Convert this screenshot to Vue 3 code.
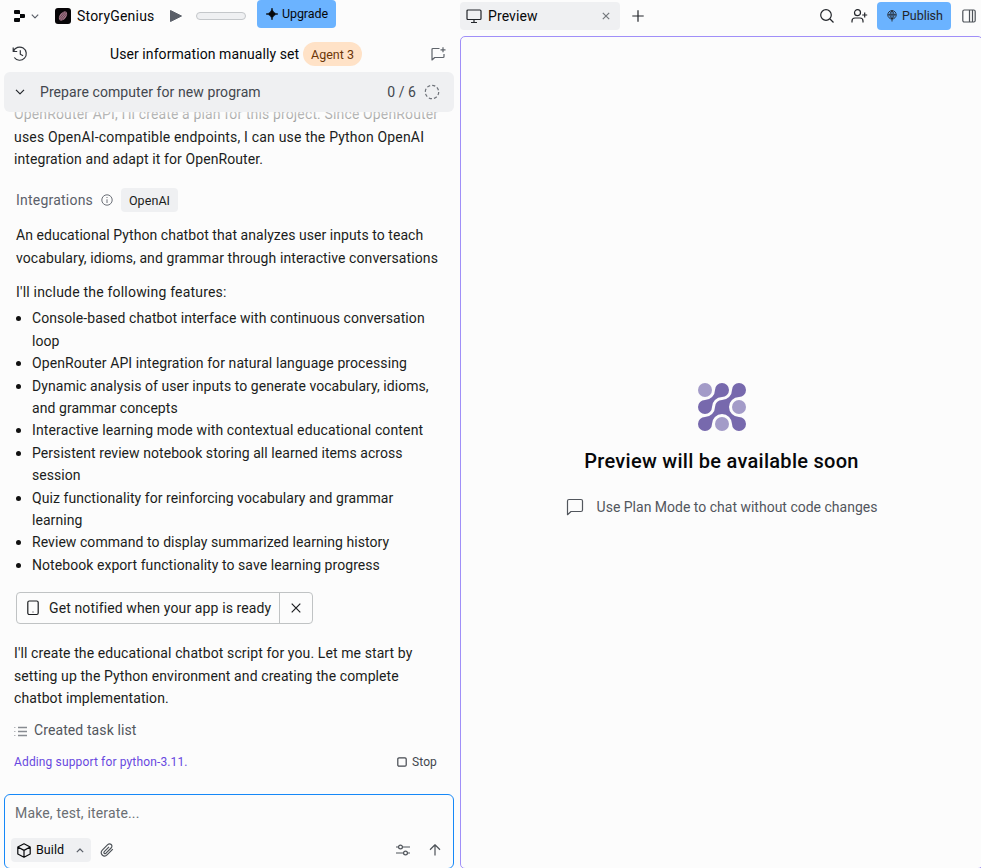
<script setup>
const intro = ["OpenRouter API, I'll create a plan for this project. Since OpenRouter", 'uses OpenAI-compatible endpoints, I can use the Python OpenAI', 'integration and adapt it for OpenRouter.']
const summary = ['An educational Python chatbot that analyzes user inputs to teach', 'vocabulary, idioms, and grammar through interactive conversations']
const features = [
  ['Console-based chatbot interface with continuous conversation', 'loop'],
  ['OpenRouter API integration for natural language processing'],
  ['Dynamic analysis of user inputs to generate vocabulary, idioms,', 'and grammar concepts'],
  ['Interactive learning mode with contextual educational content'],
  ['Persistent review notebook storing all learned items across', 'session'],
  ['Quiz functionality for reinforcing vocabulary and grammar', 'learning'],
  ['Review command to display summarized learning history'],
  ['Notebook export functionality to save learning progress'],
]
const closing = ["I'll create the educational chatbot script for you. Let me start by", 'setting up the Python environment and creating the complete', 'chatbot implementation.']
</script>

<template>
  <div class="app">
    <section class="left">
      <header class="topbar">
        <svg class="replit" width="12" height="12" viewBox="0 0 12 12"><path d="M1 0h4q1 0 1 1v3H1Q0 4 0 3V1Q0 0 1 0zM6 4h4q1 0 1 1v2q0 1-1 1H6zM1 8h5v3q0 1-1 1H1q-1 0-1-1V9q0-1 1-1z" fill="#07080a" /></svg>
        <svg class="menu-chev" width="8" height="5" viewBox="0 0 8 5"><path d="M.8.7 4 3.9 7.200.7" class="ln" /></svg>
        <svg class="applogo" width="16" height="16" viewBox="0 0 16 16"><rect width="16" height="16" rx="3" fill="#070507" /><g transform="rotate(38 8 8)"><ellipse cx="8" cy="8" rx="3.200" ry="5.300" fill="#a77a8b" /><path d="M6.500 4v8M8 3v10M9.500 4v8" stroke="#4b2c3b" stroke-width=".6" /></g></svg>
        <span class="appname">StoryGenius</span>
        <svg class="play" width="12" height="12" viewBox="0 0 12 12"><path d="M.5.5v11L11.500 6z" fill="#5b6069" stroke="#5b6069" stroke-linejoin="round" /></svg>
        <span class="meter"></span>
        <button class="upgrade"><svg width="12" height="12" viewBox="0 0 12 12"><path d="M6 0Q6.600 5.400 12 6 6.600 6.600 6 12 5.400 6.600 0 6 5.400 5.400 6 0z" fill="#07080a" stroke="#07080a" stroke-width=".6" /></svg><span>Upgrade</span></button>
      </header>

      <div class="threadbar">
        <svg class="history" width="16" height="16" viewBox="0 0 16 16"><path d="M1.200 1.500v4h4M1.500 5.300A6.600 6.600 0 1 1 2.300 11.500M8.300 4.300v4l2.800 1.400" class="ln" /></svg>
        <div class="thread"><span class="thread-title">User information manually set</span><span class="agent">Agent 3</span></div>
        <svg class="newchat" width="15" height="14" viewBox="0 0 15 14"><path d="M8.500 1.500H2q-1 0-1 1V13l2.700-2.500H12q1 0 1-1V7M12 .3v5M9.500 2.800h5" class="ln" /></svg>
      </div>

      <div class="task">
        <svg width="10" height="6" viewBox="0 0 10 6"><path d="M1 .8l4 4 4-4" class="ln chev" /></svg>
        <span class="task-title">Prepare computer for new program</span>
        <span class="count">0 / 6</span>
        <svg width="16" height="16" viewBox="0 0 16 16"><circle cx="8" cy="8" r="6.700" class="ln dash" /></svg>
      </div>

      <main class="chat">
        <div class="fade"></div>
        <p class="intro"><span v-for="l in intro" :key="l" class="line">{{ l }}</span></p>
        <div class="integrations">
          <span class="int-label">Integrations</span>
          <svg width="12" height="12" viewBox="0 0 12 12"><circle cx="6" cy="6" r="5.200" class="ln thin" /><path d="M6 5.300V9M6 3v1" class="ln thin" /></svg>
          <span class="chip">OpenAI</span>
        </div>
        <p class="summary"><span v-for="l in summary" :key="l" class="line">{{ l }}</span></p>
        <p class="include"><span class="line">I'll include the following features:</span></p>
        <ul>
          <li v-for="f in features" :key="f[0]"><span v-for="l in f" :key="l" class="line">{{ l }}</span></li>
        </ul>
        <div class="notify">
          <div class="notify-main">
            <svg width="12" height="16" viewBox="0 0 12 16"><rect x=".8" y="1" width="10.400" height="13.500" rx="1.500" class="ln" /><path d="M5.500 12h1" class="ln thin" /></svg>
            <span>Get notified when your app is ready</span>
          </div>
          <div class="notify-close"><svg width="10" height="10" viewBox="0 0 10 10"><path d="M.7.7l8.600 8.600M9.300.7.7 9.300" class="ln" /></svg></div>
        </div>
        <p class="closing"><span v-for="l in closing" :key="l" class="line">{{ l }}</span></p>
        <div class="created">
          <svg width="14" height="11" viewBox="0 0 14 11"><path d="M4 1.500h9M4 5.500h9M4 9.500h9" class="ln bars" /><path d="M0 1.500H1.500M0 5.500H1.500M0 9.500H1.500" class="ln dots" /></svg>
          <span>Created task list</span>
        </div>
        <div class="status">
          <span class="adding">Adding support for python-3.11.</span>
          <span class="stop"><svg width="10" height="10" viewBox="0 0 10 10"><rect x=".8" y=".8" width="8.400" height="8.400" rx="1.200" class="ln" /></svg><span>Stop</span></span>
        </div>
      </main>

      <footer class="composer">
        <div class="placeholder">Make, test, iterate...</div>
        <div class="tools">
          <div class="build">
            <svg width="14" height="15" viewBox="0 0 14 15"><path d="M7 .8 13.200 4v7L7 14.200.8 11V4zM.8 4 7 7.400 13.200 4M7 7.400v6.800" class="ln" /></svg>
            <span>Build</span>
            <svg class="up" width="8" height="5" viewBox="0 0 8 5"><path d="M.8 4.200 4 1l3.200 3.200" class="ln" /></svg>
          </div>
          <svg class="clip" width="14" height="14" viewBox="0 0 14 14"><path d="M12.800 6.200 7.300 11.700C3.800 15.200-1 10.500 2.300 7.100L7.700 1.700c2.400-2.400 5.800.9 3.400 3.300L6 10.200c-1.300 1.200-2.900-.4-1.700-1.600L9 3.900" class="ln" /></svg>
          <svg class="sliders" width="14" height="12" viewBox="0 0 14 12"><path d="M0 3h2.500M6.500 3H14M0 9h7.500M11.500 9H14" class="ln" /><circle cx="4.500" cy="3" r="1.900" class="ln" /><circle cx="9.500" cy="9" r="1.900" class="ln" /></svg>
          <svg class="send" width="12" height="12" viewBox="0 0 12 12"><path d="M6 11.500V1M1 5.700 6 .8l5 4.900" class="ln" /></svg>
        </div>
      </footer>
    </section>

    <section class="right">
      <header class="tabs">
        <div class="tab">
          <svg width="16" height="15" viewBox="0 0 16 15"><path d="M2 1h12q1 0 1 1v7.500q0 1-1 1H2q-1 0-1-1V2q0-1 1-1zM8 10.500v3M5 13.500h6" class="ln" /></svg>
          <span class="tab-name">Preview</span>
          <svg class="close" width="8" height="8" viewBox="0 0 8 8"><path d="M.8.8l6.400 6.400M7.200.8.8 7.200" class="ln" /></svg>
        </div>
        <svg class="plus" width="12" height="12" viewBox="0 0 12 12"><path d="M6 .3v11.400M.3 6h11.400" class="ln" /></svg>
        <svg class="search" width="14" height="14" viewBox="0 0 14 14"><circle cx="6" cy="6" r="5.300" class="ln" /><path d="m10 10 3.500 3.500" class="ln" /></svg>
        <svg class="invite" width="17" height="14" viewBox="0 0 17 14"><circle cx="6.500" cy="3.700" r="3" class="ln" /><path d="M1 13.500V12q0-3 3-3h5q3 0 3 3v1.500M13.700 3.500v5M11.200 6h5" class="ln" /></svg>
        <button class="publish"><svg width="10" height="12" viewBox="0 0 10 12"><circle cx="5" cy="4.800" r="4.200" class="ln" /><path d="M.8 4.800h8.400M5 .6V11.500M5 .6Q.8 4.800 5 9 9.200 4.800 5 .6" class="ln" /></svg><span>Publish</span></button>
        <svg class="panel" width="14" height="14" viewBox="0 0 14 14"><rect x=".8" y="1" width="12.400" height="12" rx="1.500" class="ln" /><path d="M7.500 1v12M10.500 1v12" class="ln" /></svg>
      </header>
      <div class="preview">
        <svg width="48" height="48" viewBox="0 0 48 48">
          <g fill="#a39bc8"><circle cx="7" cy="7" r="7" /><circle cx="41" cy="24" r="7" /><circle cx="24" cy="41" r="7" /></g>
          <path fill="#7769ad" d="M17 7A10 10 0 0 1 7 17A7 7 0 1 0 14 24A10 10 0 0 1 24 14A7 7 0 1 0 17 7zM34 7A10 10 0 0 1 24 17A7 7 0 0 0 17 24A10 10 0 0 1 7 34A7 7 0 1 0 14 41A10 10 0 0 1 34 41A7 7 0 1 0 41 34A10 10 0 0 1 41 14A7 7 0 1 0 34 7z" />
        </svg>
        <h1>Preview will be available soon</h1>
        <div class="hint">
          <svg width="18" height="18" viewBox="0 0 18 18"><path d="M3 1.500h12q1.500 0 1.500 1.500v9q0 1.500-1.500 1.500H5L1.500 16.700V3q0-1.500 1.500-1.500z" class="ln" /></svg>
          <span>Use Plan Mode to chat without code changes</span>
        </div>
      </div>
    </section>
  </div>
</template>

<style>
body { background: #fcfcfc; overflow: hidden; }
</style>
<style scoped>
* { box-sizing: border-box; }
.app { display: flex; width: 981px; height: 868px; overflow: hidden; background: #fcfcfc; color: #07080a; font-family: Roboto, "Noto Sans", sans-serif; font-size: 14px; line-height: 22.4px; letter-spacing: .08px; }
svg { display: block; flex: none; overflow: visible; }
.ln { fill: none; stroke: currentColor; stroke-width: 1.2; stroke-linejoin: round; }
.thin { stroke-width: .9; }
span { white-space: nowrap; }
p, ul, h1 { margin: 0; padding: 0; }
button { border: 0; font: inherit; letter-spacing: inherit; color: inherit; }
.left { width: 460px; flex: none; display: flex; flex-direction: column; }
.topbar { height: 36px; display: flex; align-items: center; padding: 0 0 4px 14px; flex: none; }
.menu-chev { margin-left: 5px; color: #5b6069; }
.replit { width: 12px; }
.applogo { margin-left: 16px; }
.appname { margin-left: 6px; width: 78px; letter-spacing: .2px; }
.play { margin-left: 15px; }
.meter { width: 50px; height: 8px; margin-left: 14px; border: 1px solid #c4c7ca; border-radius: 4px; background: #eff0f2; }
.upgrade { width: 79px; height: 28px; margin: -4px 0 0 11px; padding: 0 0 0 9px; border-radius: 4px; background: #6bb3ff; display: flex; align-items: center; gap: 4px; font-size: 12.500px; letter-spacing: -.1px; }
.threadbar { height: 36px; display: flex; align-items: center; padding: 0 14px 0 12px; flex: none; }
.history { color: #30343a; }
.thread { margin-left: 82px; display: flex; align-items: center; flex: 1; }
.thread-title { width: 193px; }
.agent { height: 24px; width: 59px; text-align: center; border-radius: 12px; background: #ffe2c7; color: #6b3608; font-size: 12.500px; letter-spacing: 0; line-height: 25px; }
.newchat { color: #5f646b; }
.task { height: 40px; width: 450px; margin-left: 4px; padding: 0 14px 0 11px; border-radius: 6px; background: #eff0f2; display: flex; align-items: center; flex: none; color: #43474e; }
.chev { color: #22252a; }
.task-title { margin-left: 15px; flex: 1; }
.count { margin-right: 8px; }
.dash { stroke-dasharray: 3.2 2.06; color: #6d7178; }
.chat { position: relative; height: 682px; flex: none; overflow: hidden; padding: 0 14px; display: flex; flex-direction: column; color: #1b1d20; }
.fade { position: absolute; left: 0; right: 0; top: 0; height: 16px; background: linear-gradient(#fcfcfcbb, #fcfcfc77); }
.line { display: block; }
.intro { margin-top: -8.6px; letter-spacing: .14px; }
.intro .line:nth-child(2) { letter-spacing: .185px; }
.intro .line:nth-child(3) { letter-spacing: .1px; }
.integrations { display: flex; align-items: center; height: 24px; margin: 17.4px 0 0 2px; color: #5b6069; }
.int-label { width: 77px; margin-right: 8px; letter-spacing: .22px; }
.chip { margin-left: 8px; width: 57px; height: 24px; border-radius: 4px; background: #eff0f2; text-align: center; font-size: 12.500px; line-height: 25px; color: #1b1d20; }
.summary { margin: 12.200px 0 0 2px; letter-spacing: .09px; }
.summary .line:first-child { letter-spacing: .055px; }
.include { margin: 12px 0 0 2px; letter-spacing: .2px; }
ul { margin: 4px 0 0 2px; list-style: none; letter-spacing: .06px; }
li { position: relative; padding-left: 16px; }
li:nth-child(2) { letter-spacing: .09px; }
li:nth-child(4) { letter-spacing: .135px; }
li::before { content: ""; position: absolute; left: 0; top: 9px; width: 5px; height: 5px; border-radius: 50%; background: #111; }
.notify { display: flex; width: 297px; height: 32px; flex: none; margin: 15.500px 0 0 2px; border: 1px solid #c0c3c4; border-radius: 4px; }
.notify-main { width: 263px; padding-left: 10px; display: flex; align-items: center; gap: 10px; border-right: 1px solid #c0c3c4; letter-spacing: .12px; }
.notify-close { flex: 1; display: grid; place-items: center; }
.closing { margin-top: 18.500px; letter-spacing: .1px; }
.created { height: 22px; margin-top: 9.500px; display: flex; align-items: center; gap: 6px; color: #52565d; letter-spacing: .1px; }
.bars { color: #878b91; stroke-width: 1.5; }
.created svg { margin-top: 2px; }
.dots { color: #b5b8bc; }
.status { height: 24px; margin-top: 9px; display: flex; justify-content: space-between; align-items: center; font-size: 12px; padding-right: 9px; letter-spacing: .14px; }
.adding { color: #6848e0; }
.stop { display: flex; align-items: center; gap: 5px; color: #43474e; }
.composer { width: 450px; height: 75px; margin-left: 4px; flex: none; border: 1px solid #1688f8; border-radius: 6px; padding: 7px 6px; }
.placeholder { color: #6a6e73; padding-left: 4px; letter-spacing: .16px; }
.tools { display: flex; align-items: center; height: 24px; margin-top: 14px; color: #4d5258; }
.build { display: flex; align-items: center; width: 80px; height: 24px; padding: 0 7px 0 6px; background: #eff0f2; border-radius: 4px; color: #07080a; font-size: 12.500px; gap: 5px; }
.up { margin-left: auto; color: #5b6069; }
.clip { margin-left: 9px; }
.sliders { margin-left: auto; }
.send { margin: 0 6px 0 19px; }
.right { flex: 1; display: flex; flex-direction: column; min-width: 0; }
.tabs { height: 36px; flex: none; display: flex; align-items: center; padding: 0 5px 4px 0; color: #22252a; }
.tab { width: 160px; height: 28px; display: flex; align-items: center; padding: 0 10px 0 6px; background: #eff0f2; border-radius: 4px; color: #22252a; }
.tab-name { margin-left: 6px; flex: 1; color: #07080a; letter-spacing: .1px; }
.close { color: #73777c; }
.plus { margin-left: 12px; }
.search { margin-left: auto; }
.invite { margin-left: 17px; }
.publish { width: 74px; height: 28px; margin: 0 11px 0 9px; border-radius: 4px; background: #6bb3ff; padding: 0 0 0 10px; display: flex; align-items: center; gap: 5px; font-size: 12.500px; letter-spacing: -.05px; }
.panel { color: #4d5258; }
.publish .ln { stroke-width: .9; }
.preview { width: 523px; height: 833px; flex: none; border: 1px solid #a08ff8; border-radius: 5px; display: flex; flex-direction: column; align-items: center; padding-top: 346px; }
h1 { margin-top: 17px; font-size: 20px; line-height: 26px; font-weight: 500; white-space: nowrap; letter-spacing: .28px; }
.hint { display: flex; align-items: center; gap: 13px; margin-top: 22px; color: #52565d; letter-spacing: 0; }
</style>
